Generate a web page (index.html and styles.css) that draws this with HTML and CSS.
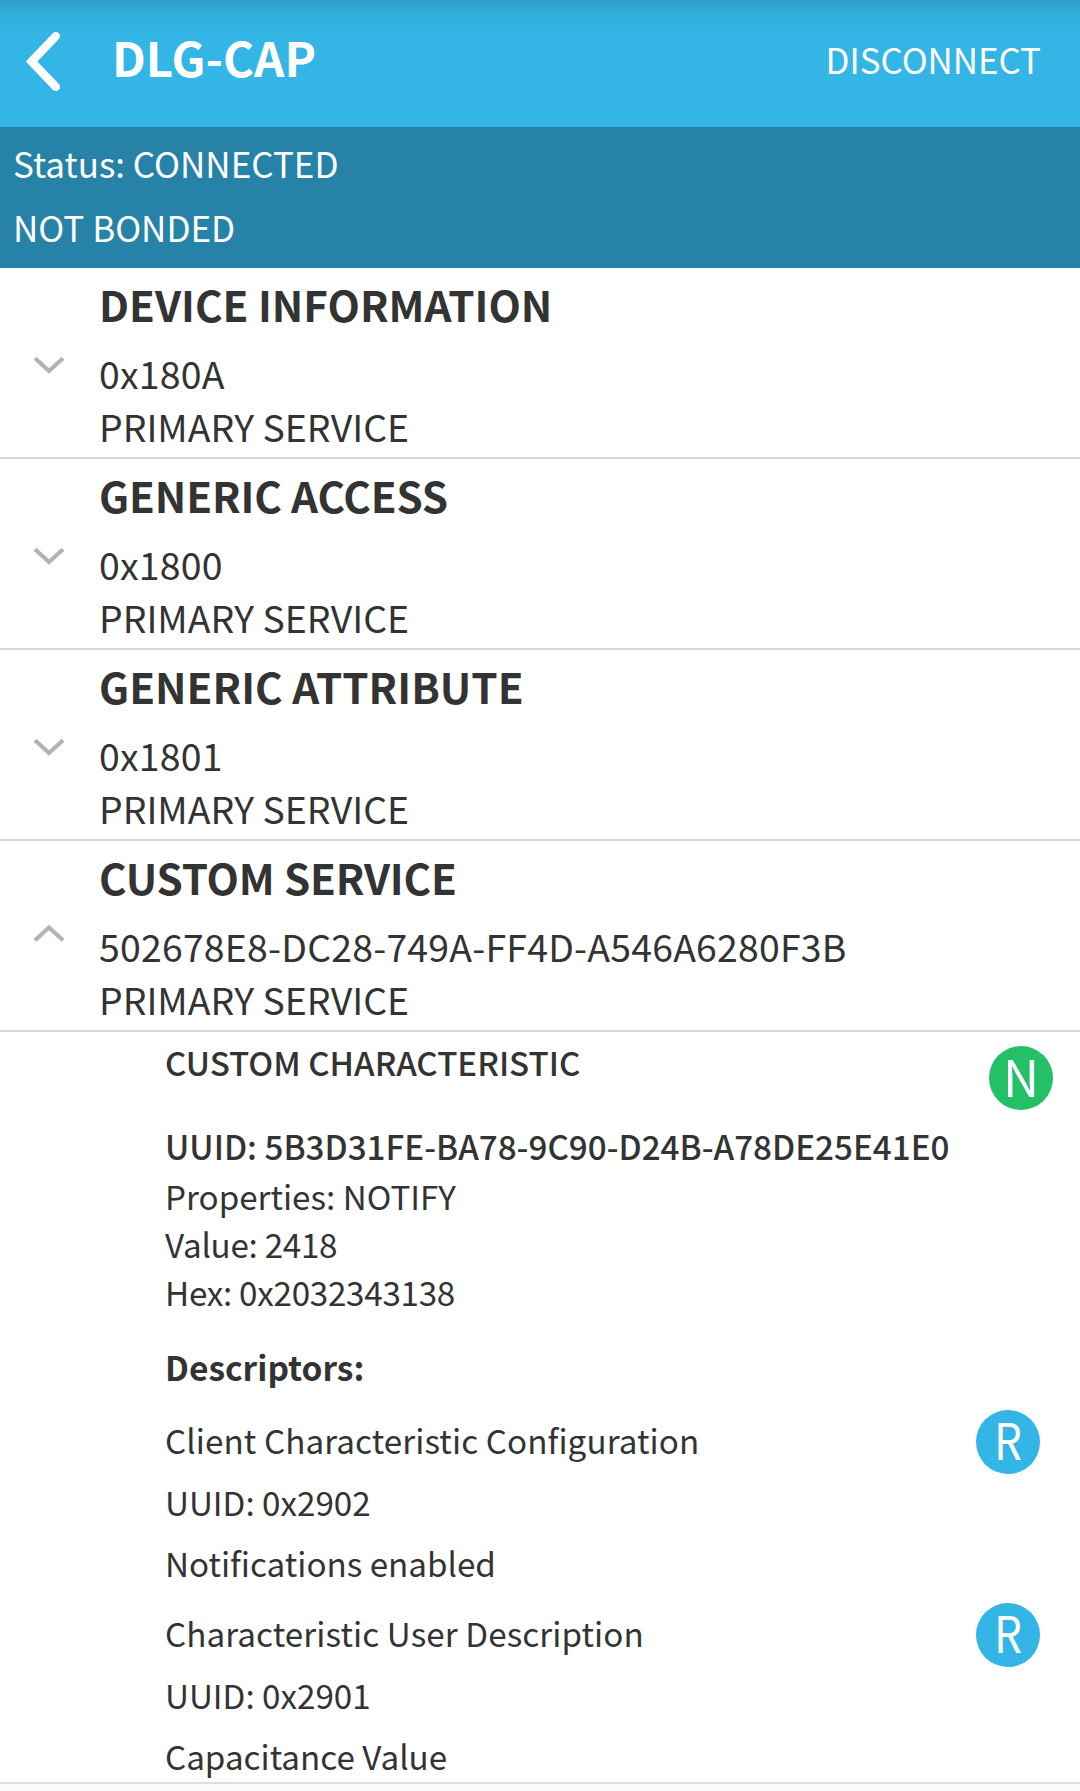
FILE: index.html
```html
<!DOCTYPE html>
<html lang="en">
<head>
<meta charset="utf-8">
<title>DLG-CAP</title>
<link rel="stylesheet" href="styles.css">
</head>
<body>
<header class="bar">
  <svg class="back" width="36" height="61" viewBox="0 0 36 61"><path d="M29.8 5.2 L5.5 30.5 L29.8 55.8"/></svg>
  <h1 class="title">DLG-CAP</h1>
  <span class="action">DISCONNECT</span>
</header>
<section class="status"><p>Status: CONNECTED</p><p>NOT BONDED</p></section>
<main>
  <section class="service">
    <svg class="chevron" width="32" height="18" viewBox="0 0 32 18"><path d="M2 2.2 L16 15 L30 2.2"/></svg>
    <div><h2>DEVICE INFORMATION</h2><p class="id">0x180A</p><p>PRIMARY SERVICE</p></div>
  </section>
  <section class="service">
    <svg class="chevron" width="32" height="18" viewBox="0 0 32 18"><path d="M2 2.2 L16 15 L30 2.2"/></svg>
    <div><h2 class="tight">GENERIC ACCESS</h2><p class="id">0x1800</p><p>PRIMARY SERVICE</p></div>
  </section>
  <section class="service">
    <svg class="chevron" width="32" height="18" viewBox="0 0 32 18"><path d="M2 2.2 L16 15 L30 2.2"/></svg>
    <div><h2>GENERIC ATTRIBUTE</h2><p class="id">0x1801</p><p>PRIMARY SERVICE</p></div>
  </section>
  <section class="service">
    <svg class="chevron open" width="32" height="18" viewBox="0 0 32 18"><path d="M2 16.3 L16 3.5 L30 16.3"/></svg>
    <div><h2 class="tight">CUSTOM SERVICE</h2><p class="id">502678E8-DC28-749A-FF4D-A546A6280F3B</p><p>PRIMARY SERVICE</p></div>
  </section>
  <section class="characteristic">
    <div class="head"><h3>CUSTOM CHARACTERISTIC</h3><span class="badge notify">N</span></div>
    <p class="uuid">UUID: 5B3D31FE-BA78-9C90-D24B-A78DE25E41E0</p>
    <p class="prop">Properties: NOTIFY</p>
    <p class="prop value">Value: 2418</p>
    <p class="prop value">Hex: 0x2032343138</p>
    <h4>Descriptors:</h4>
    <div class="descriptor">
      <div><p class="name">Client Characteristic Configuration</p><p>UUID: 0x2902</p><p>Notifications enabled</p></div>
      <span class="badge read"><span>R</span></span>
    </div>
    <div class="descriptor">
      <div><p class="name">Characteristic User Description</p><p>UUID: 0x2901</p><p>Capacitance Value</p></div>
      <span class="badge read"><span>R</span></span>
    </div>
  </section>
</main>
</body>
</html>
```

FILE: styles.css
```css
* { box-sizing: border-box; margin: 0; padding: 0; }
body { width: 1080px; height: 1791px; overflow: hidden; background: #fafafa; color: #333; font-family: "Noto Sans CJK SC", "Noto Sans", sans-serif; }
.bar { display: flex; height: 127px; padding: 0 39px 0 26px; background: linear-gradient(#2d9fca 0, #30a9d6 9px, #32b1e0 20px, #33b5e5 32px); color: #fff; }
.back { margin-top: 31px; flex: none; }
.back path { fill: none; stroke: #fff; stroke-width: 8.4; stroke-linecap: round; }
.title { margin-left: 50px; padding-top: 27px; font-size: 47.4px; line-height: 60px; font-weight: 700; }
.action { margin-left: auto; padding-top: 29px; font-size: 34.9px; line-height: 60px; }
.status { height: 141px; padding: 4px 13px; background: #2682a7; color: #fff; font-size: 35px; line-height: 64px; }
.service { display: flex; height: 191px; background: #fff; border-bottom: 2px solid #d8d8d8; }
.chevron { flex: none; margin: 88px 34px 0 33px; }
.chevron.open { margin-top: 83px; }
.chevron path { fill: none; stroke: #b3b3b3; stroke-width: 4.2; }
.service h2 { height: 78px; padding-top: 6px; font-size: 42.1px; line-height: 60px; }
.service .tight { letter-spacing: -.15px; }
.service p { font-size: 37.4px; line-height: 53px; }
.service .id { line-height: 54px; letter-spacing: .22px; }
.characteristic { height: 752px; padding: 0 27px 0 165px; background: #fff; border-bottom: 2px solid #dedede; font-size: 33.2px; }
.head { display: flex; justify-content: space-between; height: 88px; padding-top: 14px; }
h3 { font-size: 33.1px; line-height: 32px; font-weight: 500; }
.uuid { font-weight: 500; line-height: 52px; }
.prop { line-height: 48px; }
.value { letter-spacing: -.27px; }
h4 { height: 60px; margin-top: 20px; font-size: 33.5px; line-height: 62px; }
.descriptor { display: flex; justify-content: space-between; height: 193px; padding: 13px 13px 0 0; line-height: 61.5px; }
.name { letter-spacing: .09px; }
.badge { width: 64px; height: 64px; border-radius: 50%; background: #33b5e5; color: #fff; font-size: 50px; line-height: 58px; text-align: center; }
.read { margin-top: 1px; line-height: 56px; }
.read span { display: inline-block; transform: scaleX(.88); }
.notify { background: #23c065; }
```
